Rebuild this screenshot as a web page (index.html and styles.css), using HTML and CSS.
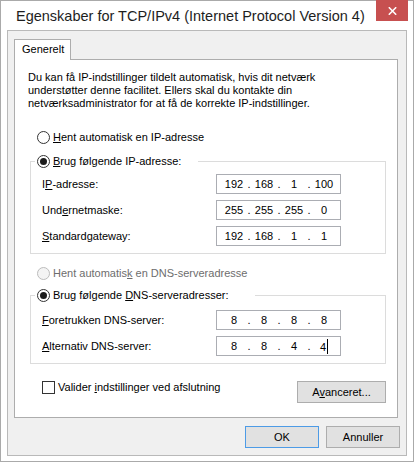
FILE: index.html
```html
<!DOCTYPE html>
<html lang="da">
<head>
    <meta charset="UTF-8">
    <meta name="viewport" content="width=device-width, initial-scale=1.0">
    <title>Egenskaber for TCP/IPv4</title>
    <link rel="stylesheet" href="styles.css">
</head>
<body>

<div class="window">

    <!-- Title bar -->
    <div class="titlebar">
        <span class="title">Egenskaber for TCP/IPv4 (Internet Protocol Version 4)</span>
        <span class="close-btn">
            <svg width="9" height="8" viewBox="0 0 9 8"><path d="M0.8 0.3 L8.2 7.7 M8.2 0.3 L0.8 7.7" stroke="#fff" stroke-width="1.6" fill="none"/></svg>
        </span>
    </div>

    <div class="client">
        <div class="tab">Generelt</div>

        <div class="panel">
            <p class="intro">Du kan få IP-indstillinger tildelt automatisk, hvis dit netværk<br>understøtter denne facilitet. Ellers skal du kontakte din<br>netværksadministrator for at få de korrekte IP-indstillinger.</p>

            <!-- IP address -->
            <div class="radio-row">
                <span class="radio"></span>
                <span><u>H</u>ent automatisk en IP-adresse</span>
            </div>

            <div class="group">
                <div class="group-head head-ip">
                    <span class="radio checked"></span>
                    <span><u>B</u>rug følgende IP-adresse:</span>
                </div>
                <div class="field-row">
                    <span class="field-label">I<u>P</u>-adresse:</span>
                    <div class="ip">
                        <span class="oct">192</span><span class="dot">.</span>
                        <span class="oct">168</span><span class="dot">.</span>
                        <span class="oct">1</span><span class="dot">.</span>
                        <span class="oct">100</span>
                    </div>
                </div>
                <div class="field-row">
                    <span class="field-label">Und<u>e</u>rnetmaske:</span>
                    <div class="ip">
                        <span class="oct">255</span><span class="dot">.</span>
                        <span class="oct">255</span><span class="dot">.</span>
                        <span class="oct">255</span><span class="dot">.</span>
                        <span class="oct">0</span>
                    </div>
                </div>
                <div class="field-row">
                    <span class="field-label"><u>S</u>tandardgateway:</span>
                    <div class="ip">
                        <span class="oct">192</span><span class="dot">.</span>
                        <span class="oct">168</span><span class="dot">.</span>
                        <span class="oct">1</span><span class="dot">.</span>
                        <span class="oct">1</span>
                    </div>
                </div>
            </div>

            <!-- DNS -->
            <div class="radio-row radio-dns">
                <span class="radio disabled"></span>
                <span class="disabled-text">Hent automatis<u>k</u> en DNS-serveradresse</span>
            </div>

            <div class="group group-dns">
                <div class="group-head head-dns">
                    <span class="radio checked"></span>
                    <span>Brug følgende <u>D</u>NS-serveradresser:</span>
                </div>
                <div class="field-row">
                    <span class="field-label"><u>F</u>oretrukken DNS-server:</span>
                    <div class="ip">
                        <span class="oct">8</span><span class="dot">.</span>
                        <span class="oct">8</span><span class="dot">.</span>
                        <span class="oct">8</span><span class="dot">.</span>
                        <span class="oct">8</span>
                    </div>
                </div>
                <div class="field-row">
                    <span class="field-label"><u>A</u>lternativ DNS-server:</span>
                    <div class="ip">
                        <span class="oct">8</span><span class="dot">.</span>
                        <span class="oct">8</span><span class="dot">.</span>
                        <span class="oct">4</span><span class="dot">.</span>
                        <span class="oct">4<span class="caret"></span></span>
                    </div>
                </div>
            </div>

            <div class="bottom-row">
                <div class="check-row">
                    <span class="checkbox"></span>
                    <span>Valider <u>i</u>ndstillinger ved afslutning</span>
                </div>
                <button class="btn btn-advanced">A<u>v</u>anceret...</button>
            </div>
        </div>

        <!-- Dialog buttons -->
        <div class="dialog-buttons">
            <button class="btn btn-dialog btn-default">OK</button>
            <button class="btn btn-dialog">Annuller</button>
        </div>
    </div>

</div>

</body>
</html>
```

FILE: styles.css
```css
/* General */
body {
    margin: 0;
    font-family: "Liberation Sans", Arial, sans-serif;
    font-size: 11px;
    line-height: 13px;
    color: #000;
    background-color: #fff;
}

u {
    text-decoration-thickness: 1px;
    text-underline-offset: 1px;
}

/* Window frame */
.window {
    box-sizing: border-box;
    width: 414px;
    height: 462px;
    border: 1px solid #aaaaaa;
    background-color: #fff;
    padding: 0 6px 5px;
}

.titlebar {
    display: flex;
    justify-content: space-between;
    align-items: flex-start;
    height: 29px;
    margin: 0 -6px;
    padding: 0 5px 0 15px;
}

.title {
    font-size: 14.5px;
    line-height: 30px;
    color: #1e1e1e;
}

.close-btn {
    width: 32px;
    height: 21px;
    margin-top: -1px;
    background-color: #c75050;
    display: flex;
    align-items: center;
    justify-content: center;
    padding-top: 1px;
    box-sizing: border-box;
}

.close-btn svg {
    display: block;
}

/* Client area */
.client {
    border: 1px solid #b9b9b9;
    background-color: #f0f0f0;
    padding: 8px 6px 7px;
}

.tab {
    box-sizing: border-box;
    width: 57px;
    height: 21px;
    margin-bottom: -1px;
    padding: 3px 0 0 7px;
    border: 1px solid #adadad;
    border-bottom: none;
    background-color: #fff;
    position: relative;
    z-index: 1;
}

.panel {
    background-color: #fff;
    border: 1px solid #adadad;
    margin-right: 2px;
    padding: 0 11px 14px 0;
}

.intro {
    margin: 11px 0 0 13px;
}

/* Radio buttons */
.radio-row {
    display: flex;
    align-items: center;
    gap: 3px;
    height: 13px;
    margin: 21px 0 0 22px;
}

.radio-dns {
    margin-top: 13px;
}

.radio {
    box-sizing: border-box;
    flex: none;
    width: 13px;
    height: 13px;
    border: 1px solid #333;
    border-radius: 50%;
    background-color: #fff;
    display: flex;
    align-items: center;
    justify-content: center;
}

.radio.checked::after {
    content: "";
    width: 7px;
    height: 7px;
    border-radius: 50%;
    background-color: #1c1c1c;
}

.radio.disabled {
    border-color: #bcbcbc;
    background-color: #f4f4f4;
}

.disabled-text {
    color: #6d6d6d;
}

/* Group boxes */
.group {
    display: flex;
    flex-direction: column;
    border: 1px solid #dcdcdc;
    margin: 17px 0 0 15px;
    padding: 0 0 7px 11px;
}

.group-dns {
    margin-top: 15px;
}

.group-head {
    align-self: flex-start;
    display: flex;
    align-items: center;
    gap: 3px;
    height: 13px;
    margin: -7px 0 0 -7px;
    padding: 0 17px 0 2px;
    background-color: #fff;
}

.head-dns {
    padding-right: 27px;
}

.field-row {
    display: flex;
    align-items: center;
    margin-top: 6px;
}

.group-dns .group-head + .field-row {
    margin-top: 8px;
}

.field-label {
    width: 174px;
}

/* IP address fields */
.ip {
    box-sizing: border-box;
    display: flex;
    align-items: center;
    width: 125px;
    height: 20px;
    border: 1px solid #abadb3;
    padding: 0 4px 0 5px;
    background-color: #fff;
}

.oct {
    width: 24px;
    text-align: center;
}

.dot {
    width: 6px;
    text-align: center;
}

.caret {
    display: inline-block;
    width: 1px;
    height: 15px;
    margin-left: 1px;
    background-color: #000;
    vertical-align: -3px;
}

/* Bottom row */
.bottom-row {
    display: flex;
    justify-content: space-between;
    align-items: flex-start;
    margin: 17px 0 0 27px;
}

.check-row {
    display: flex;
    align-items: center;
    gap: 3px;
    height: 13px;
}

.checkbox {
    box-sizing: border-box;
    width: 13px;
    height: 13px;
    border: 1px solid #333;
    background-color: #fff;
}

/* Buttons */
.btn {
    box-sizing: border-box;
    height: 22px;
    padding: 0;
    border: 1px solid #adadad;
    background-color: #e1e1e1;
    font-family: inherit;
    font-size: 11px;
    line-height: 13px;
    color: #000;
}

.btn-advanced {
    width: 89px;
}

.dialog-buttons {
    display: flex;
    justify-content: flex-end;
    gap: 7px;
    margin-top: 8px;
}

.btn-dialog {
    width: 74px;
}

.btn-default {
    border-color: #4d9be6;
}
```
